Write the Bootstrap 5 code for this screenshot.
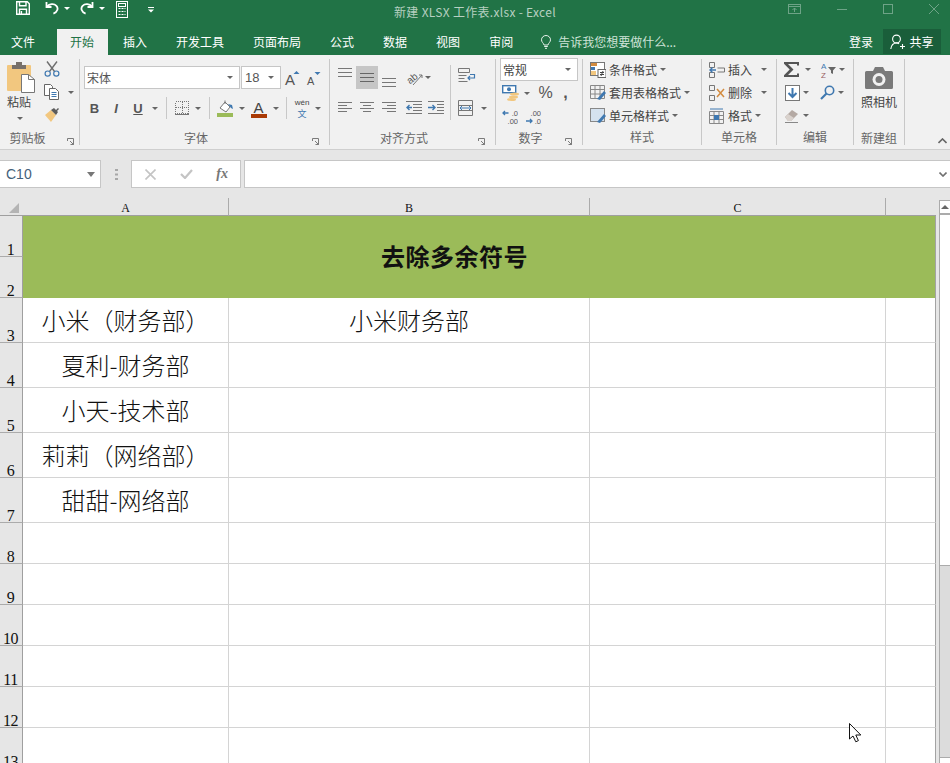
<!doctype html>
<html lang="zh">
<head>
<meta charset="utf-8">
<title>新建 XLSX 工作表.xlsx - Excel</title>
<link rel="stylesheet" href="https://cdn.jsdelivr.net/npm/bootstrap@5.3.0/dist/css/bootstrap.min.css">
<style>
html,body{height:763px;overflow:hidden;margin:0;background:#e6e6e6}
body{font-family:"Noto Sans CJK SC","Liberation Sans",sans-serif;font-size:12px;line-height:1;color:#444}
svg{display:block;flex:none}
.app-win{width:950px;height:763px;overflow:hidden}
.title-row{height:29px;background:#217346;display:grid;grid-template-columns:1fr auto 1fr;color:#fff}
.qat{padding:1px 0 0 16px;height:18px}
.win-title{color:#b7d0c1;padding-top:6px;font-size:12px;letter-spacing:.3px}
.win-ctl{padding:4px 11px 0 0;gap:36px;height:18px}
.tab-row{height:26px;background:#217346;color:#fff}
.tab-x{padding:0 14px 0 13px;margin-right:2px;height:26px;display:flex;align-items:center}
.tab-file{padding:0 11px;margin-right:11px}
.tab-on{background:#f1f1f1;color:#217346}
.tell-me{color:#cfe3d8;margin-left:12px;gap:7px;height:26px}
.share-btn{width:58px;height:25px;background:#1a5e3a;color:#fff;margin:0 9px 1px 10px;gap:4px;align-self:flex-start}
.ribbon{height:95px;background:#f1f1f1;border-bottom:1px solid #cfcfcf;padding-top:4px}
.r-grp{height:86px;border-right:1px solid #c8c8c8}
.r-body{height:71px}
.r-label{height:15px;color:#666;line-height:16px}
.r-label-t{flex:1 1 0;text-align:center}
.launch{width:17px;padding-top:8px}
.g1{width:80px}.g2{width:250px}.g3{width:166px}.g4{width:87px}.g5{width:119px}.g6{width:75px}.g7{width:77px}.g8{width:51px}
.launch-wide{width:24px;padding:8px 5px 0 0}
.pl3{padding-left:3px}.pl4{padding-left:4px}.pl7{padding-left:7px}
.tri{width:0;height:0;border-left:3px solid transparent;border-right:3px solid transparent;border-top:3px solid #666;display:block;flex:none}
.tri-w{border-top-color:#fff;margin-bottom:3px}
.tri-big{border-left-width:4.5px;border-right-width:4.5px;border-top-width:5px;border-top-color:#777}
.cell-c{display:flex;align-items:center;justify-content:center;flex:none;height:100%}
.cw3{width:3px}.cw5{width:5px}.cw6{width:6px}.cw8{width:8px}.cw10{width:10px}.cw11{width:11px}.cw12{width:12px}.cw13{width:13px}.cw14{width:14px}.cw15{width:15px}.cw16{width:16px}.cw17{width:17px}.cw19{width:19px}.cw20{width:20px}.cw21{width:21px}.cw22{width:22px}.cw23{width:23px}.cw26{width:26px}.cw27{width:27px}.cw43{width:43px}
.paste-col{width:41px;padding:3px 0 0 4px}
.paste-txt{margin-top:3px;width:24px;text-align:center}
.paste-tri{margin:9px 0 0 10px}
.clip-col{width:36px;padding-top:2px;gap:7px}
.clip-row{height:16px}
.sel-box{background:#fff;border:1px solid #c6c6c6;height:23px;padding:0 6px 0 2px;flex:none}
.sel-font{width:156px;font-size:12px;color:#555}
.sel-size{width:40px;margin-left:1px;font-size:13px;color:#555;padding-left:3px;font-family:"Liberation Sans",sans-serif}
.sel-num{width:78px;margin:-1px 0 0 0;color:#444}
.row-top{margin-top:7px;height:23px}
.row-two{margin-top:10px;height:18px}
.fs-row{height:23px}
.vsep{width:1px;height:22px;background:#c8c8c8;display:block}
.btn-on{background:#c6c6c6;height:23px}
.a-left{width:117px}
.a-left-s{border-right:1px solid #c8c8c8;height:55px;margin-top:6px;padding-top:1px}
.as-r2{margin-top:7px}
.a-right{padding:9px 0 0 7px}
.a-r2{margin-top:16px;gap:4px}
.num-r1{margin-top:3px;height:18px}
.num-r2{margin-top:6px;height:18px}
.num-sym{font:16px "Liberation Sans",sans-serif;color:#555}
.ft-btn{font:bold 13px "Liberation Sans",sans-serif;color:#555}
.wen-cell{gap:0}
.wen-a{font:8px/8px "Liberation Sans",sans-serif;color:#444;display:block;height:8px;overflow:visible}
.wen-b{font-size:9px;line-height:9px;color:#3f78b0;display:block;margin-top:2px}
.st-body{margin-top:-1px}
.st-row{height:23px;gap:3px;white-space:nowrap}
.cap-pad{padding-top:7px}
.cap-txt{margin-top:7px}
.collapse-mark{position:absolute;right:3px;top:83px}
.fbar{height:48px;background:#e6e6e6;padding-top:10px}
.name-box{width:101px;height:28px;background:#fff;border:1px solid #c6c6c6;border-left:0;padding:0 5px 0 6px;font:14px "Liberation Sans",sans-serif;color:#44617a}
.dots-cell{width:30px;height:28px}
.fx-box{width:110px;height:28px;background:#fff;border:1px solid #c6c6c6;padding:0 12px 0 13px}
.fx-mark{font:italic bold 14px "Liberation Serif",serif;color:#777}
.fx-input{height:28px;background:#fff;border:1px solid #c6c6c6;border-right:0;margin-left:3px;padding-right:3px}
.sheet-zone{height:565px;background:#e6e6e6}
.sheet-tab{table-layout:fixed;width:936px;border-collapse:separate;border-spacing:0;background:#fff;flex:none;align-self:flex-start;border-right:0}
.c-rh{width:23px}.c-a{width:206px}.c-b{width:361px}.c-c{width:296px}.c-d{width:50px}
.hd-corner,.hd-col{height:18px;background:#e6e6e6;border-bottom:1px solid #9f9f9f;padding:0}
.hd-col{text-align:center;font:12px/12px "Liberation Serif",serif;color:#111;border-right:1px solid #ababab;vertical-align:bottom;padding-bottom:1px}
.hd-d{border-right:0}
.hd-corner{border-right:0;padding:5px 0 0 9px;vertical-align:top}
.rh{background:#e6e6e6;border-right:1px solid #9f9f9f;border-bottom:1px solid #ababab;font:16px/13px "Liberation Serif",serif;color:#111;text-align:center;vertical-align:bottom;padding:0 1px 0 0;letter-spacing:-.4px;overflow:hidden}
.rh2{height:41px}.rh1{height:41px}
.r45{height:45px}.r41{height:41px}
.gc{border-right:1px solid #d4d4d4;border-bottom:1px solid #d4d4d4;padding:0;text-align:center;font-size:24px;font-weight:300;line-height:30px;color:#111;vertical-align:middle;white-space:nowrap}
.gc-d{border-right:1px solid #a3a3a3}
.green-cell{background:#9bbb59;font-size:24px;font-weight:700;color:#111;text-align:center;vertical-align:middle;padding:0 0 2px 0;letter-spacing:.5px;line-height:30px}
.green-d{border-right:1px solid #a3a3a3}
.vscroll{width:11px;margin:2px 0 0 3px;height:563px;background:#dcdcdc;border-left:1px solid #ababab}
.vs-up{height:15px;background:#fff;border-top:1px solid #ababab;border-bottom:2px solid #ababab}
.vs-thumb{height:351px;background:#fff;border-bottom:1px solid #ababab}
.vs-down{height:6px;background:#fff;border-top:1px solid #ababab;margin-top:auto}
.tri-up{width:0;height:0;border-left:4px solid transparent;border-right:4px solid transparent;border-bottom:4px solid #666;display:block}
.mouse-arrow{position:absolute;left:849px;top:723px}
</style>
</head>
<body>
<div class="app-win d-flex flex-column position-relative">

<!-- title bar -->
<div class="title-row">
  <div class="qat d-flex align-items-start">
    <svg width="14" height="14" viewBox="0 0 14 14" fill="none" stroke="#fff" stroke-width="1.4"><path d="M.7.7h10.6l2 2v10.6H.7z"/><path d="M3.5.7v4h6.5v-4M3.5 13.3V8.2h7v5.1"/><path d="M5.4 10v3" /></svg>
    <span class="cell-c cw15"></span>
    <svg width="14" height="14" viewBox="0 0 14 14" fill="none" stroke="#fff" stroke-width="1.8"><path d="M1.5 1v5h5"/><path d="M1.8 5.6C4.5 2.6 9 2.2 11.4 4.8c2.2 2.4 1.2 6.4-3 7.8"/></svg>
    <span class="cell-c cw16"><span class="tri tri-w"></span></span>
    <span class="cell-c cw5"></span>
    <svg width="14" height="14" viewBox="0 0 14 14" fill="none" stroke="#fff" stroke-width="1.8"><path d="M12.5 1v5h-5"/><path d="M12.2 5.6C9.5 2.6 5 2.2 2.6 4.8c-2.2 2.4-1.2 6.4 3 7.8"/></svg>
    <span class="cell-c cw16"><span class="tri tri-w"></span></span>
    <span class="cell-c cw6"></span>
    <svg width="13" height="17" viewBox="0 0 13 17" fill="none" stroke="#fff"><rect x=".5" y=".5" width="11" height="16"/><rect x="2.5" y="2.5" width="7" height="3"/><path stroke-dasharray="2 1" d="M2.5 7.5h7M2.5 10.5h7M2.5 13.5h7"/></svg>
    <span class="cell-c cw43"><svg width="6" height="6" viewBox="0 0 6 6" fill="#fff"><rect width="6" height="1"/><path d="M0 2.6h6L3 5.6z"/></svg></span>
  </div>
  <div class="win-title">新建 XLSX 工作表.xlsx - Excel</div>
  <div class="win-ctl d-flex justify-content-end align-items-start">
    <svg width="13" height="10" viewBox="0 0 13 10" fill="none" stroke="#6ea387"><rect x=".5" y=".5" width="12" height="9"/><path d="M1 2.5h11M6.5 8V4M4.5 6l2-2 2 2"/></svg>
    <svg width="10" height="10" viewBox="0 0 10 10" stroke="#6ea387"><path d="M0 5.5h10"/></svg>
    <svg width="10" height="10" viewBox="0 0 10 10" fill="none" stroke="#6ea387"><rect x=".5" y=".5" width="9" height="9"/></svg>
    <svg width="10" height="10" viewBox="0 0 10 10" stroke="#6ea387"><path d="M0 0l10 10M10 0L0 10"/></svg>
  </div>
</div>

<!-- tabs -->
<div class="tab-row d-flex align-items-center">
  <div class="tab-x tab-file">文件</div>
  <div class="tab-x tab-on">开始</div>
  <div class="tab-x">插入</div>
  <div class="tab-x">开发工具</div>
  <div class="tab-x">页面布局</div>
  <div class="tab-x">公式</div>
  <div class="tab-x">数据</div>
  <div class="tab-x">视图</div>
  <div class="tab-x">审阅</div>
  <div class="tell-me d-flex align-items-center">
    <svg width="10" height="14" viewBox="0 0 10 14" fill="none" stroke="#e8f1ec"><path d="M3 10C2.600 8 .5 7.200.5 4.800a4.500 4.300 0 0 1 9 0C9.500 7.200 7.400 8 7 10z"/><path d="M3.200 11.500h3.600M4 13.300h2"/></svg>
    <span>告诉我您想要做什么...</span>
  </div>
  <div class="ms-auto">登录</div>
  <div class="share-btn d-flex align-items-center justify-content-center">
    <svg width="15" height="16" viewBox="0 0 15 16" fill="none" stroke="#fff" stroke-width="1.1"><circle cx="6.500" cy="5" r="3.900"/><path d="M.8 15c.5-3.500 2.700-6 5.700-6 1 0 1.800.2 2.600.7M10 12.500h5M12.500 10v5"/></svg>
    <span>共享</span>
  </div>
</div>

<!-- ribbon -->
<div class="ribbon d-flex position-relative">

  <!-- clipboard -->
  <div class="r-grp g1 d-flex flex-column">
    <div class="r-body d-flex pl3">
      <div class="paste-col d-flex flex-column align-items-start">
        <svg width="28" height="31" viewBox="0 0 28 31"><rect x="0" y="3" width="24" height="26" rx="1" fill="#f2c77f"/><rect x="5" y="3" width="14" height="4" fill="#77706a"/><rect x="9" y="0" width="6" height="4" fill="#77706a"/><path d="M14.500 12.500h7l6 5v13h-13z" fill="#fff" stroke="#777"/><path d="M21.500 12.500v5h6" fill="none" stroke="#777"/></svg>
        <div class="paste-txt">粘贴</div>
        <span class="tri paste-tri"></span>
      </div>
      <div class="clip-col d-flex flex-column">
        <div class="clip-row d-flex">
          <svg width="16" height="16" viewBox="0 0 16 16" fill="none"><path d="M3 .5l7.500 10M13 .5L5.500 10.500" stroke="#6e6e6e" stroke-width="1.400"/><circle cx="3.700" cy="12.600" r="2.600" stroke="#3f78b0" stroke-width="1.200"/><circle cx="12.300" cy="12.600" r="2.600" stroke="#3f78b0" stroke-width="1.200"/></svg>
        </div>
        <div class="clip-row d-flex">
          <svg width="16" height="16" viewBox="0 0 16 16" fill="none" stroke="#666"><path d="M.5.5h6l2 2v9h-8z" fill="#fff"/><path d="M5.500 4.500h6l3 3v8h-9z" fill="#fff"/><path d="M7.500 8.500h5M7.500 10.500h5M7.500 12.500h5" stroke="#3f78b0"/></svg>
          <span class="cell-c cw19 ps-1"><span class="tri"></span></span>
        </div>
        <div class="clip-row d-flex">
          <svg width="16" height="16" viewBox="0 0 16 16"><path d="M1 8l6-5 5 5-5 7z" fill="#f2c77f"/><path d="M7 3l3-2 4 4-2 3z" fill="#5c5c5c"/><path d="M11 4l3-3 1 1-3 3z" fill="#5c5c5c"/></svg>
        </div>
      </div>
    </div>
    <div class="r-label d-flex"><span class="r-label-t">剪贴板</span>
      <span class="launch launch-wide d-flex justify-content-end"><svg width="7" height="7" viewBox="0 0 7 7" fill="none" stroke="#7b7b7b"><path d="M.5 3V.5h6v6H3.500M3 3l3 3M6.500 4v2.500H4"/></svg></span></div>
  </div>

  <!-- font -->
  <div class="r-grp g2 d-flex flex-column">
    <div class="r-body pl4">
      <div class="row-top d-flex">
        <div class="sel-box sel-font d-flex align-items-center justify-content-between"><span>宋体</span><span class="tri"></span></div>
        <div class="sel-box sel-size d-flex align-items-center justify-content-between"><span>18</span><span class="tri"></span></div>
        <span class="cell-c cw22"><svg width="16" height="20" viewBox="0 0 16 20"><text x="1" y="17" font-family="Liberation Sans" font-size="15" fill="#555">A</text><path d="M9.500 6l3-3 3 3z" fill="#3f78b0"/></svg></span>
        <span class="cell-c cw22"><svg width="16" height="20" viewBox="0 0 16 20"><text x="1" y="17" font-family="Liberation Sans" font-size="11" fill="#555">A</text><path d="M8.500 4l3 3 3-3z" fill="#3f78b0"/></svg></span>
      </div>
      <div class="row-two d-flex">
        <span class="cell-c cw21 ft-btn">B</span>
        <span class="cell-c cw22 fst-italic ft-btn">I</span>
        <span class="cell-c cw22 ft-btn text-decoration-underline">U</span>
        <span class="cell-c cw12"><span class="tri"></span></span>
        <span class="cell-c cw10"><span class="vsep"></span></span>
        <span class="cell-c cw21"><svg width="14" height="14" viewBox="0 0 14 14" fill="none" stroke="#777" stroke-dasharray="1 1" shape-rendering="crispEdges"><path d="M.5.500h13v12h-13zM7.500 .500v12M.5 6.500h13"/><path d="M0 13.500h14" stroke-dasharray="none"/></svg></span>
        <span class="cell-c cw12"><span class="tri"></span></span>
        <span class="cell-c cw10"><span class="vsep"></span></span>
        <span class="cell-c cw22"><svg width="17" height="17" viewBox="0 0 17 17"><path d="M3 8l5-6 5 5-4 5z" fill="#fff" stroke="#777"/><path d="M8 .5V4" stroke="#777"/><path d="M11 4l4 1 1 4-2-1z" fill="#3f78b0"/><rect x="0" y="13" width="16" height="4" fill="#9bbb59"/></svg></span>
        <span class="cell-c cw11"><span class="tri"></span></span>
        <span class="cell-c cw23"><svg width="16" height="20" viewBox="0 -3 16 20"><text x="2.500" y="12" font-family="Liberation Sans" font-size="15" fill="#444">A</text><rect x="0" y="13" width="16" height="4" fill="#a93a05"/></svg></span>
        <span class="cell-c cw11"><span class="tri"></span></span>
        <span class="cell-c cw10"><span class="vsep"></span></span>
        <span class="cell-c cw22 flex-column wen-cell"><span class="wen-a">wén</span><span class="wen-b">文</span></span>
        <span class="cell-c cw10"><span class="tri"></span></span>
      </div>
    </div>
    <div class="r-label d-flex"><span class="r-label-t">字体</span>
      <span class="launch"><svg width="7" height="7" viewBox="0 0 7 7" fill="none" stroke="#7b7b7b"><path d="M.5 3V.5h6v6H3.500M3 3l3 3M6.500 4v2.500H4"/></svg></span></div>
  </div>

  <!-- alignment -->
  <div class="r-grp g3 d-flex flex-column">
    <div class="r-body pl4 d-flex">
      <div class="a-left a-left-s">
        <div class="fs-row d-flex">
          <span class="cell-c cw22"><svg width="14" height="23" viewBox="0 0 14 23" stroke="#777"><path d="M0 2.500h14M0 6.500h14M0 10.500h14"/></svg></span>
          <span class="cell-c cw22 btn-on"><svg width="14" height="23" viewBox="0 0 14 23" stroke="#666"><path d="M0 7.500h14M0 11.500h14M0 15.500h14"/></svg></span>
          <span class="cell-c cw22"><svg width="14" height="23" viewBox="0 0 14 23" stroke="#777"><path d="M0 12.500h14M0 16.500h14M0 20.500h14"/></svg></span>
          <span class="cell-c cw5"></span>
          <span class="cell-c cw19"><svg width="18" height="18" viewBox="0 0 18 18" fill="none"><text x="1" y="13" font-family="Liberation Sans" font-size="10" fill="#555" transform="rotate(-40 6 10)">ab</text><path d="M7 16L16 6M16 6h-3M16 6v3" stroke="#777"/></svg></span>
          <span class="cell-c cw8"><span class="tri"></span></span>
        </div>
        <div class="fs-row d-flex as-r2">
          <span class="cell-c cw22"><svg width="14" height="11" viewBox="0 0 14 11" stroke="#777"><path d="M0 .5h14M0 3.500h9M0 6.500h14M0 9.500h9"/></svg></span>
          <span class="cell-c cw22"><svg width="14" height="11" viewBox="0 0 14 11" stroke="#777"><path d="M0 .5h14M3 3.500h8M0 6.500h14M3 9.500h8"/></svg></span>
          <span class="cell-c cw22"><svg width="14" height="11" viewBox="0 0 14 11" stroke="#777"><path d="M0 .5h14M5 3.500h9M0 6.500h14M5 9.500h9"/></svg></span>
          <span class="cell-c cw3"></span>
          <span class="cell-c cw22"><svg width="16" height="13" viewBox="0 0 16 13" fill="none"><path d="M0 .5h16M7 3.500h9M7 6.500h9M7 9.500h9M0 12.500h16" stroke="#777"/><path d="M6 6.500H1M3.500 4L1 6.500 3.500 9" stroke="#3f78b0" stroke-width="1.400"/></svg></span>
          <span class="cell-c cw22"><svg width="16" height="13" viewBox="0 0 16 13" fill="none"><path d="M0 .5h16M9 3.500h7M9 6.500h7M9 9.500h7M0 12.500h16" stroke="#777"/><path d="M0 6.500h7M4.500 4L7 6.500 4.500 9" stroke="#3f78b0" stroke-width="1.400"/></svg></span>
        </div>
      </div>
      <div class="a-right d-flex flex-column">
        <svg width="18" height="16" viewBox="0 0 18 16" fill="none"><path d="M.5.500h11v4h-11zM.5 7.500h8M.5 10.500h6M.5 13.500h9" stroke="#777"/><path d="M12 6.500h4.500v3.500H10M12 8l-2 2 2 2" stroke="#3f78b0" stroke-width="1.200"/></svg>
        <div class="d-flex align-items-center a-r2">
          <svg width="15" height="16" viewBox="0 0 15 16" fill="none"><path d="M.5.500h14v15H.5zM.5 5.500h14M.5 10.500h14" stroke="#777"/><rect x="1" y="6" width="13" height="4" fill="#f1f1f1"/><path d="M2 8h11M4 6l-2 2 2 2M11 6l2 2-2 2" stroke="#3f78b0"/></svg>
          <span class="cell-c cw14"><span class="tri"></span></span>
        </div>
      </div>
    </div>
    <div class="r-label d-flex"><span class="r-label-t">对齐方式</span>
      <span class="launch"><svg width="7" height="7" viewBox="0 0 7 7" fill="none" stroke="#7b7b7b"><path d="M.5 3V.5h6v6H3.500M3 3l3 3M6.500 4v2.500H4"/></svg></span></div>
  </div>

  <!-- number -->
  <div class="r-grp g4 d-flex flex-column">
    <div class="r-body pl4">
      <div class="sel-box sel-num d-flex align-items-center justify-content-between"><span>常规</span><span class="tri"></span></div>
      <div class="num-r1 d-flex">
        <span class="cell-c cw22"><svg width="18" height="16" viewBox="0 0 18 16" fill="none"><rect x=".7" y=".7" width="13" height="7" fill="#fff" stroke="#3f78b0" stroke-width="1.400"/><circle cx="7" cy="4.200" r="2" fill="#3f78b0"/><ellipse cx="12.500" cy="9" rx="4.500" ry="1.500" fill="#f2c77f"/><ellipse cx="11.500" cy="12" rx="4.500" ry="1.500" fill="#f2c77f"/><ellipse cx="9.500" cy="14.500" rx="4.500" ry="1.500" fill="#f2c77f"/></svg></span>
        <span class="cell-c cw10"><span class="tri"></span></span>
        <span class="cell-c cw27 num-sym">%</span>
        <span class="cell-c cw13 num-sym fw-bold">,</span>
      </div>
      <div class="num-r2 d-flex">
        <span class="cell-c cw20"><svg width="16" height="18" viewBox="0 0 16 18"><text x="16" y="8" text-anchor="end" font-family="Liberation Sans" font-size="7.500" fill="#555">.0</text><text x="16" y="16" text-anchor="end" font-family="Liberation Sans" font-size="7.500" fill="#555">.00</text><path d="M6.500 5H1M3 3L1 5l2 2" fill="none" stroke="#3f78b0" stroke-width="1.300"/></svg></span>
        <span class="cell-c cw26"><svg width="16" height="18" viewBox="0 0 16 18"><text x="16" y="8" text-anchor="end" font-family="Liberation Sans" font-size="7.500" fill="#555">.00</text><text x="16" y="16" text-anchor="end" font-family="Liberation Sans" font-size="7.500" fill="#555">.0</text><path d="M1 13h6M5 11l2 2-2 2" fill="none" stroke="#3f78b0" stroke-width="1.300"/></svg></span>
      </div>
    </div>
    <div class="r-label d-flex"><span class="r-label-t">数字</span>
      <span class="launch"><svg width="7" height="7" viewBox="0 0 7 7" fill="none" stroke="#7b7b7b"><path d="M.5 3V.5h6v6H3.500M3 3l3 3M6.500 4v2.500H4"/></svg></span></div>
  </div>

  <!-- styles -->
  <div class="r-grp g5 d-flex flex-column">
    <div class="r-body pl7 st-body">
      <div class="st-row d-flex align-items-center">
        <svg width="16" height="16" viewBox="0 0 16 16" fill="none"><rect x=".5" y=".5" width="14" height="13" fill="#fff" stroke="#777"/><rect x="1" y="1" width="6" height="3" fill="#d38b3e"/><rect x="1" y="5" width="4" height="3" fill="#3f78b0"/><rect x="1" y="9" width="5" height="4" fill="#f2c77f"/><rect x="8" y="7.500" width="8" height="8" fill="#fff" stroke="#666"/><path d="M10 10.500h4M10 12.500h4M13 9l-2 5" stroke="#444"/></svg>
        <span>条件格式</span><span class="tri"></span>
      </div>
      <div class="st-row d-flex align-items-center">
        <svg width="16" height="16" viewBox="0 0 16 16" fill="none"><path d="M.5.500h14v13H.5zM.5 4.500h14M.5 9h14M5 .5v13M10 .5v13" stroke="#888"/><path d="M7 14l7-8 2 2-6 7z" fill="#3f78b0"/></svg>
        <span>套用表格格式</span><span class="tri"></span>
      </div>
      <div class="st-row d-flex align-items-center">
        <svg width="16" height="16" viewBox="0 0 16 16" fill="none"><rect x=".5" y=".5" width="14" height="13" fill="#d5e2ef" stroke="#888"/><path d="M7 14l7-8 2 2-6 7z" fill="#3f78b0"/></svg>
        <span>单元格样式</span><span class="tri"></span>
      </div>
    </div>
    <div class="r-label d-flex"><span class="r-label-t">样式</span></div>
  </div>

  <!-- cells -->
  <div class="r-grp g6 d-flex flex-column">
    <div class="r-body pl7 st-body">
      <div class="st-row d-flex align-items-center">
        <svg width="16" height="16" viewBox="0 0 16 16" fill="none"><path d="M.5.500h5v5h-5zM.5 10.500h5v5h-5zM8.500 6h7v4h-7" stroke="#777"/><path d="M7 8H1M3.500 5.500L1 8l2.500 2.500" stroke="#3f78b0" stroke-width="1.400"/></svg>
        <span>插入</span><span class="cell-c cw17"><span class="tri"></span></span>
      </div>
      <div class="st-row d-flex align-items-center">
        <svg width="16" height="16" viewBox="0 0 16 16" fill="none"><path d="M.5.500h5v5h-5zM.5 10.500h5v5h-5z" stroke="#777"/><path d="M8 4l7 8M15 4l-7 8" stroke="#d38b3e" stroke-width="1.500"/></svg>
        <span>删除</span><span class="cell-c cw17"><span class="tri"></span></span>
      </div>
      <div class="st-row d-flex align-items-center">
        <svg width="16" height="16" viewBox="0 0 16 16" fill="none"><path d="M.5 3.500h14v12H.5zM.5 7.500h14M.5 11.500h14M5 3.500v12M10 3.500v12" stroke="#888"/><rect x="5" y="7" width="5" height="5" fill="#3f78b0"/><path d="M1 1h13" stroke="#3f78b0"/></svg>
        <span>格式</span><span class="tri"></span>
      </div>
    </div>
    <div class="r-label d-flex"><span class="r-label-t">单元格</span></div>
  </div>

  <!-- editing -->
  <div class="r-grp g7 d-flex flex-column">
    <div class="r-body pl7 st-body">
      <div class="fs-row d-flex align-items-center">
        <svg width="16" height="15" viewBox="0 0 16 15"><path d="M0 0h15v3.500h-2V2H4l5.500 5.500L4 13h9v-1.500h2V15H0v-1.800L5.700 7.500 0 1.800z" fill="#555"/></svg>
        <span class="cell-c cw16"><span class="tri"></span></span><span class="cw5 d-block"></span>
        <svg width="15" height="18" viewBox="0 0 15 18"><text x="0" y="8" font-family="Liberation Sans" font-size="8" fill="#3f78b0">A</text><text x="0" y="17" font-family="Liberation Sans" font-size="8" fill="#9a5f5f">Z</text><path d="M7 6h8l-3 3.500V13l-2-1V9.500z" fill="#666"/></svg>
        <span class="cell-c cw12"><span class="tri"></span></span>
      </div>
      <div class="fs-row d-flex align-items-center">
        <span class="cell-c cw16"><svg width="15" height="16" viewBox="0 0 15 16" fill="none"><rect x=".5" y=".5" width="14" height="15" fill="#fff" stroke="#777"/><path d="M7.500 3v9M3.500 8l4 4 4-4" stroke="#3f78b0" stroke-width="2"/></svg></span>
        <span class="cell-c cw12"><span class="tri"></span></span><span class="cw8 d-block"></span>
        <span class="cell-c cw15"><svg width="15" height="15" viewBox="0 0 15 15" fill="none"><circle cx="9.500" cy="5.500" r="4.200" stroke="#3f78b0" stroke-width="1.600"/><path d="M6.500 8.500L1 14" stroke="#3f78b0" stroke-width="2.200"/></svg></span>
        <span class="cell-c cw12"><span class="tri"></span></span>
      </div>
      <div class="fs-row d-flex align-items-center">
        <span class="cell-c cw16"><svg width="16" height="14" viewBox="0 0 16 14"><path d="M1 8l7-7 6 4-7 7H4z" fill="#b4a9a3"/><path d="M1 8l3-3 6 4-3 3H4z" fill="#d9d2cd"/><path d="M1 13.500h13" stroke="#888"/></svg></span>
        <span class="cell-c cw12"><span class="tri"></span></span>
      </div>
    </div>
    <div class="r-label d-flex"><span class="r-label-t">编辑</span></div>
  </div>

  <!-- camera -->
  <div class="r-grp g8 d-flex flex-column">
    <div class="r-body cap-pad d-flex flex-column align-items-center">
      <svg width="28" height="23" viewBox="0 0 28 23"><path d="M1.500 5H8l2-4h8l2 4h6.500A1.500 1.500 0 0 1 28 6.500v15a1.500 1.500 0 0 1-1.500 1.500h-25A1.500 1.500 0 0 1 0 21.500v-15A1.500 1.500 0 0 1 1.500 5z" fill="#7a7a7a"/><circle cx="14" cy="13.500" r="6.500" fill="#f1f1f1"/><circle cx="14" cy="13.500" r="3.500" fill="#7a7a7a"/></svg>
      <div class="cap-txt">照相机</div>
    </div>
    <div class="r-label d-flex"><span class="r-label-t">新建组</span></div>
  </div>

  <svg class="collapse-mark" width="9" height="6" viewBox="0 0 9 6" fill="none" stroke="#666" stroke-width="1.600"><path d="M.5 5l4-4 4 4"/></svg>
</div>

<!-- formula bar -->
<div class="fbar d-flex align-items-start">
  <div class="name-box d-flex align-items-center justify-content-between"><span>C10</span><span class="tri tri-big"></span></div>
  <div class="dots-cell d-flex justify-content-center align-items-center">
    <svg width="3" height="11" viewBox="0 0 3 11" fill="#a8a8a8"><rect y="0" width="3" height="2"/><rect y="4.500" width="3" height="2"/><rect y="9" width="3" height="2"/></svg>
  </div>
  <div class="fx-box d-flex align-items-center justify-content-between">
    <svg width="11" height="11" viewBox="0 0 11 11" stroke="#c4c4c4" stroke-width="1.600"><path d="M.5.500l10 10M10.500.500l-10 10"/></svg>
    <svg width="13" height="10" viewBox="0 0 13 10" fill="none" stroke="#c4c4c4" stroke-width="2.200"><path d="M1 5l4 4 7-8"/></svg>
    <span class="fx-mark">fx</span>
  </div>
  <div class="fx-input flex-grow-1 d-flex align-items-center justify-content-end">
    <svg width="8" height="5" viewBox="0 0 8 5" fill="none" stroke="#707070" stroke-width="1.600"><path d="M.5.500l3.500 3.500 3.500-3.500"/></svg>
  </div>
</div>

<!-- sheet -->
<div class="sheet-zone d-flex">
  <table class="sheet-tab">
    <colgroup><col class="c-rh"><col class="c-a"><col class="c-b"><col class="c-c"><col class="c-d"></colgroup>
    <thead>
      <tr>
        <th class="hd-corner"><svg width="10" height="10" viewBox="0 0 10 10"><path d="M10 0v10H0z" fill="#b4b4b4"/></svg></th>
        <th class="hd-col fw-normal">A</th>
        <th class="hd-col fw-normal">B</th>
        <th class="hd-col fw-normal">C</th>
        <th class="hd-col hd-d"></th>
      </tr>
    </thead>
    <tbody>
      <tr><td class="rh rh1">1</td><td class="green-cell" colspan="3" rowspan="2">去除多余符号</td><td class="green-cell green-d" rowspan="2"></td></tr>
      <tr><td class="rh rh2">2</td></tr>
      <tr class="r45"><td class="rh">3</td><td class="gc">小米（财务部）</td><td class="gc">小米财务部</td><td class="gc"></td><td class="gc gc-d"></td></tr>
      <tr class="r45"><td class="rh">4</td><td class="gc">夏利-财务部</td><td class="gc"></td><td class="gc"></td><td class="gc gc-d"></td></tr>
      <tr class="r45"><td class="rh">5</td><td class="gc">小天-技术部</td><td class="gc"></td><td class="gc"></td><td class="gc gc-d"></td></tr>
      <tr class="r45"><td class="rh">6</td><td class="gc">莉莉（网络部）</td><td class="gc"></td><td class="gc"></td><td class="gc gc-d"></td></tr>
      <tr class="r45"><td class="rh">7</td><td class="gc">甜甜-网络部</td><td class="gc"></td><td class="gc"></td><td class="gc gc-d"></td></tr>
      <tr class="r41"><td class="rh">8</td><td class="gc"></td><td class="gc"></td><td class="gc"></td><td class="gc gc-d"></td></tr>
      <tr class="r41"><td class="rh">9</td><td class="gc"></td><td class="gc"></td><td class="gc"></td><td class="gc gc-d"></td></tr>
      <tr class="r41"><td class="rh">10</td><td class="gc"></td><td class="gc"></td><td class="gc"></td><td class="gc gc-d"></td></tr>
      <tr class="r41"><td class="rh">11</td><td class="gc"></td><td class="gc"></td><td class="gc"></td><td class="gc gc-d"></td></tr>
      <tr class="r41"><td class="rh">12</td><td class="gc"></td><td class="gc"></td><td class="gc"></td><td class="gc gc-d"></td></tr>
      <tr class="r41"><td class="rh">13</td><td class="gc"></td><td class="gc"></td><td class="gc"></td><td class="gc gc-d"></td></tr>
    </tbody>
  </table>
  <div class="vscroll d-flex flex-column">
    <div class="vs-up d-flex align-items-center justify-content-center"><span class="tri-up"></span></div>
    <div class="vs-thumb"></div>
    <div class="vs-down"></div>
  </div>
</div>

<svg class="mouse-arrow" width="13" height="20" viewBox="0 0 13 20"><path d="M.5.500v15.500l3.500-3 2.800 5.800 2.600-1.200-2.600-5.600h5z" fill="#fff" stroke="#111"/></svg>
</div>
<script src="https://cdn.jsdelivr.net/npm/bootstrap@5.3.0/dist/js/bootstrap.bundle.min.js"></script>
</body>
</html>
